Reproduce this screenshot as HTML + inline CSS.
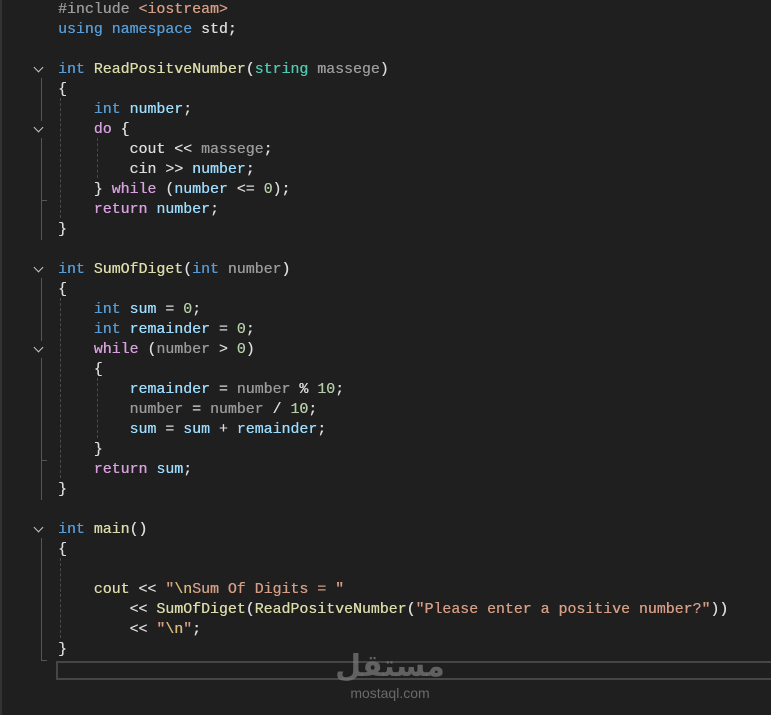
<!DOCTYPE html>
<html><head><meta charset="utf-8"><style>
html,body{margin:0;padding:0;background:#1f1f1f;width:771px;height:715px;overflow:hidden;position:relative}
.ln{position:absolute;left:58px;height:20px;line-height:20px;font-family:"Liberation Mono",monospace;font-size:14.9px;color:#dcdcdc;white-space:pre;text-shadow:0.3px 0 0 currentColor}
.k{color:#569cd6}.f{color:#dcdcaa}.p{color:#d8a0df}.v{color:#9cdcfe}.g{color:#9a9a9a}.t{color:#4ec9b0}.s{color:#d69d85}.n{color:#b5cea8}.i{color:#9b9b9b}.e{color:#d7ba7d}
.chev{position:absolute;left:35px;width:6px;height:6px;border-right:1.3px solid #c5c5c5;border-bottom:1.3px solid #c5c5c5;transform:rotate(45deg)}
.vl{position:absolute;width:1px;background:#555}
.dl{position:absolute;width:0;border-left:1px dashed #4a4a4a}
.tk{position:absolute;height:1px;width:6px;background:#555}
#c{position:absolute;left:0;top:2px;width:771px;height:715px}
</style></head><body>
<div style="position:absolute;left:0;top:0;width:2px;height:715px;background:#333"></div>
<div id="c">
<div class="ln" style="top:-2px"><span class="i">#include </span><span class="s">&lt;iostream&gt;</span></div>
<div class="ln" style="top:18px"><span class="k">using namespace</span> std;</div>
<div class="ln" style="top:58px"><span class="k">int</span> <span class="f">ReadPositveNumber</span>(<span class="t">string</span> <span class="g">massege</span>)</div>
<div class="ln" style="top:78px">{</div>
<div class="ln" style="top:98px">    <span class="k">int</span> <span class="v">number</span>;</div>
<div class="ln" style="top:118px">    <span class="p">do</span> {</div>
<div class="ln" style="top:138px">        cout &lt;&lt; <span class="g">massege</span>;</div>
<div class="ln" style="top:158px">        cin &gt;&gt; <span class="v">number</span>;</div>
<div class="ln" style="top:178px">    } <span class="p">while</span> (<span class="v">number</span> &lt;= <span class="n">0</span>);</div>
<div class="ln" style="top:198px">    <span class="p">return</span> <span class="v">number</span>;</div>
<div class="ln" style="top:218px">}</div>
<div class="ln" style="top:258px"><span class="k">int</span> <span class="f">SumOfDiget</span>(<span class="k">int</span> <span class="g">number</span>)</div>
<div class="ln" style="top:278px">{</div>
<div class="ln" style="top:298px">    <span class="k">int</span> <span class="v">sum</span> = <span class="n">0</span>;</div>
<div class="ln" style="top:318px">    <span class="k">int</span> <span class="v">remainder</span> = <span class="n">0</span>;</div>
<div class="ln" style="top:338px">    <span class="p">while</span> (<span class="g">number</span> &gt; <span class="n">0</span>)</div>
<div class="ln" style="top:358px">    {</div>
<div class="ln" style="top:378px">        <span class="v">remainder</span> = <span class="g">number</span> % <span class="n">10</span>;</div>
<div class="ln" style="top:398px">        <span class="g">number</span> = <span class="g">number</span> / <span class="n">10</span>;</div>
<div class="ln" style="top:418px">        <span class="v">sum</span> = <span class="v">sum</span> + <span class="v">remainder</span>;</div>
<div class="ln" style="top:438px">    }</div>
<div class="ln" style="top:458px">    <span class="p">return</span> <span class="v">sum</span>;</div>
<div class="ln" style="top:478px">}</div>
<div class="ln" style="top:518px"><span class="k">int</span> <span class="f">main</span>()</div>
<div class="ln" style="top:538px">{</div>
<div class="ln" style="top:578px">    <span class="f">cout</span> &lt;&lt; <span class="s">"</span><span class="e">\n</span><span class="s">Sum Of Digits = "</span></div>
<div class="ln" style="top:598px">        &lt;&lt; <span class="f">SumOfDiget</span>(<span class="f">ReadPositveNumber</span>(<span class="s">"Please enter a positive number?"</span>))</div>
<div class="ln" style="top:618px">        &lt;&lt; <span class="s">"</span><span class="e">\n</span><span class="s">"</span>;</div>
<div class="ln" style="top:638px">}</div>

<div class="chev" style="top:62px"></div>
<div class="chev" style="top:122px"></div>
<div class="chev" style="top:262px"></div>
<div class="chev" style="top:342px"></div>
<div class="chev" style="top:522px"></div>

<div class="vl" style="left:41px;top:76px;height:43px"></div>
<div class="vl" style="left:41px;top:136px;height:102px"></div>
<div class="tk" style="left:41px;top:198px"></div>
<div class="vl" style="left:41px;top:276px;height:63px"></div>
<div class="vl" style="left:41px;top:356px;height:142px"></div>
<div class="tk" style="left:41px;top:458px"></div>
<div class="vl" style="left:41px;top:536px;height:122px"></div>
<div class="tk" style="left:41px;top:658px"></div>

<div class="dl" style="left:60px;top:96px;height:120px"></div>
<div class="dl" style="left:97px;top:136px;height:40px"></div>
<div class="dl" style="left:60px;top:296px;height:180px"></div>
<div class="dl" style="left:97px;top:376px;height:60px"></div>
<div class="dl" style="left:60px;top:556px;height:80px"></div>
</div>

<div style="position:absolute;left:56px;top:661px;width:717px;height:15px;border:2px solid #464646;box-sizing:content-box"></div>

<div style="position:absolute;left:335px;top:646px;width:110px;text-align:center;font-family:'Noto Sans CJK SC','DejaVu Sans',sans-serif;font-size:30px;font-weight:bold;color:rgba(120,120,120,0.75);line-height:34px">مستقل</div>
<div style="position:absolute;left:335px;top:684px;width:110px;text-align:center;font-family:'Liberation Sans',sans-serif;font-size:14px;color:rgba(120,120,120,0.85);line-height:18px">mostaql.com</div>
</body></html>
